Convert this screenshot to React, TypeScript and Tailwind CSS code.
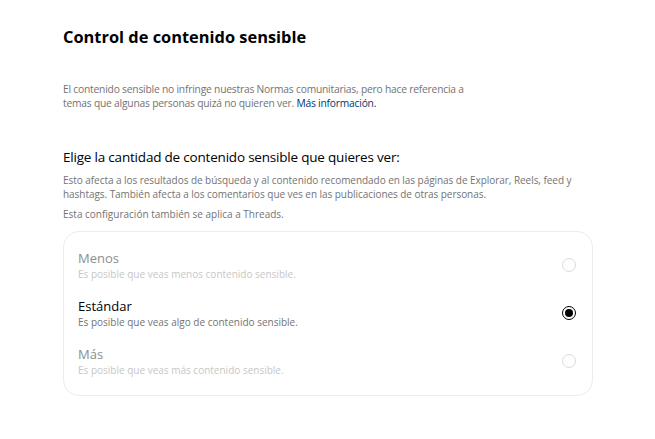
const options = [
  { title: 'Menos', desc: 'Es posible que veas menos contenido sensible.', selected: false },
  { title: 'Estándar', desc: 'Es posible que veas algo de contenido sensible.', selected: true },
  { title: 'Más', desc: 'Es posible que veas más contenido sensible.', selected: false },
];

function Radio({ selected }: { selected: boolean }) {
  if (selected) {
    return (
      <div className="flex h-[14px] w-[14px] items-center justify-center rounded-full border-[1.5px] border-black">
        <div className="h-[8px] w-[8px] rounded-full bg-black" />
      </div>
    );
  }
  return <div className="h-[14px] w-[14px] rounded-full border border-[#dbdbdb]" />;
}

export default function App() {
  return (
    <div className="min-h-screen bg-white pl-[63px] pr-[63px] pt-[25px] font-['Open_Sans',sans-serif]">
      <h1 className="text-[16.4px] font-bold leading-[24px] text-black">Control de contenido sensible</h1>

      <p className="mt-[33px] w-[420px] text-[10.25px] leading-[14px] tracking-[-0.2px] text-[#737373]">
        El contenido sensible no infringe nuestras Normas comunitarias, pero hace referencia a temas que algunas personas
        quizá no quieren ver. <span className="text-[#00376b]">Más información.</span>
      </p>

      <h2 className="mt-[37px] text-[13.5px] leading-[20px] tracking-[-0.2px] text-black">
        Elige la cantidad de contenido sensible que quieres ver:
      </h2>
      <p className="mt-[6px] w-[520px] text-[10px] leading-[14px] tracking-[-0.05px] text-[#737373]">
        Esto afecta a los resultados de búsqueda y al contenido recomendado en las páginas de Explorar, Reels, feed y
        hashtags. También afecta a los comentarios que ves en las publicaciones de otras personas.
      </p>
      <p className="mt-[6px] text-[10px] leading-[14px] text-[#737373]">Esta configuración también se aplica a Threads.</p>

      <div className="mt-[10px] w-[530px] rounded-[16px] border border-[#ececec] px-[14px] pb-[10px] pt-[9px]">
        {options.map((o) => (
          <div key={o.title} className="flex h-[48px] items-center justify-between">
            <div>
              <div className={`text-[13px] leading-[17px] ${o.selected ? 'text-black' : 'text-[#8e8e8e]'}`}>{o.title}</div>
              <div className={`text-[10px] leading-[14px] ${o.selected ? 'text-[#737373]' : 'text-[#c7c7c7]'}`}>{o.desc}</div>
            </div>
            <div className="mr-[2px]">
              <Radio selected={o.selected} />
            </div>
          </div>
        ))}
      </div>
    </div>
  );
}
